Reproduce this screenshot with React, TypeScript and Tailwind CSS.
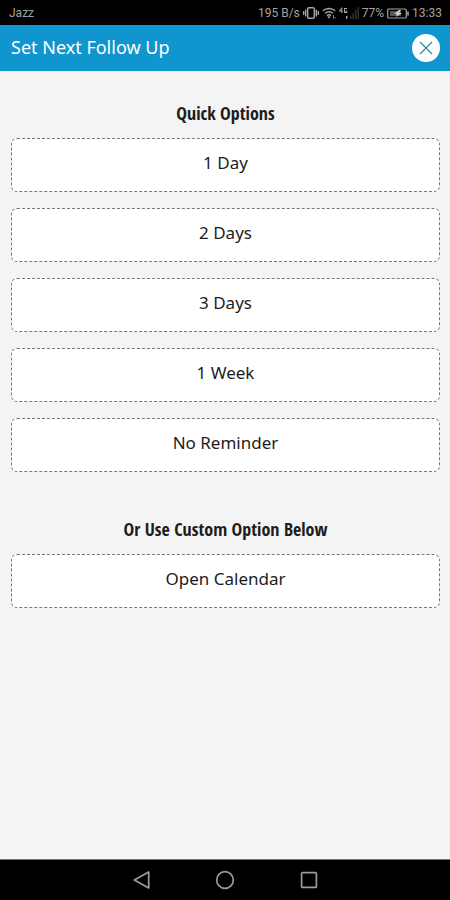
import { useState } from 'react'

const QUICK_OPTIONS = ['1 Day', '2 Days', '3 Days', '1 Week', 'No Reminder']

interface OptionButtonProps {
  label: string
  selected: boolean
  onSelect: (label: string) => void
}

function OptionButton({ label, selected, onSelect }: OptionButtonProps) {
  return (
    <button
      type="button"
      aria-pressed={selected}
      onClick={() => onSelect(label)}
      className="h-[54px] w-full rounded-md border border-dashed border-[#777777] bg-white pb-1 text-[17px] leading-6 text-[#1c1c1c]"
    >
      {label}
    </button>
  )
}

function SectionTitle({ text }: { text: string }) {
  return (
    <h2 className="mb-3 text-center font-['Open_Sans_Condensed','Noto_Sans_Condensed','Lato',sans-serif] text-[18px] leading-[25px] font-bold text-[#1c1c1c]">
      {text}
    </h2>
  )
}

function StatusBar() {
  return (
    <div className="flex h-[25px] items-center justify-between bg-black pt-px pr-2 pl-[9px] font-['Roboto',sans-serif] text-[12px] leading-4 text-[#a3a3a3]">
      <span>Jazz</span>
      <div className="flex items-center gap-[3px]">
        <span>195 B/s</span>
        {/* vibrate */}
        <svg className="h-3 w-4" viewBox="0 0 16 12" fill="none" stroke="currentColor" strokeWidth="1.4">
          <rect x="4.7" y="0.8" width="6.6" height="10.4" rx="1" />
          <path d="M2.7 2.5v7M13.3 2.5v7M0.7 4v4M15.3 4v4" />
        </svg>
        {/* wifi */}
        <svg className="h-3 w-[14px]" viewBox="0 0 14 12" fill="none" stroke="currentColor" strokeWidth="1.4">
          <path d="M0.8 3.8C4.3 0.7 9.7 0.7 13.2 3.8M3 6.3C5.2 4.3 8.8 4.3 11 6.3M5 8.6C6.2 7.6 7.8 7.6 9 8.6" />
          <path d="M5.8 9.8h2.4L7 11.2zM11.5 8v3.5M13 10v1.5" fill="currentColor" strokeWidth="0.8" />
        </svg>
        {/* 4G signal */}
        <svg className="h-3 w-5" viewBox="0 0 20 12" fill="currentColor">
          <path d="M2.5 0.5L0 3.8v0.7h2.3V6h1V4.5H4V3.7h-0.7V0.5zM2.3 2v1.7H1.1zM5 1h3v1H6v2.5h1V3.7h1.2V6H5zM7 9h1.5v2.5L7 12z" />
          <path d="M11 9h1.5v3H11zM13.5 6H15v6h-1.5zM16 3h1.5v9H16zM18.5 0H20v12h-1.5z" fill="#303030" />
        </svg>
        <span>77%</span>
        {/* battery */}
        <svg className="h-[11px] w-[22px]" viewBox="0 0 22 11" fill="none" stroke="currentColor">
          <rect x="0.7" y="1" width="18.6" height="9" rx="1" strokeWidth="1.2" />
          <path d="M21 3.5v4" strokeWidth="1.6" />
          <path d="M3 3h11v5H3z" fill="#555555" stroke="none" />
          <path d="M12 2L7 6h3l-1 3 6-4h-3l2-3z" fill="#d0d0d0" stroke="none" />
        </svg>
        <span>13:33</span>
      </div>
    </div>
  )
}

function NavBar() {
  return (
    <nav className="flex h-[41px] items-center justify-center gap-[60px] border-t border-[#777777] bg-black text-[#9b9b9b]">
      <button type="button" aria-label="Back" className="flex w-6 justify-center">
        <svg className="size-5" viewBox="0 0 20 20" fill="none" stroke="currentColor" strokeWidth="1.7" strokeLinejoin="round">
          <path d="M17.7 2v16L3.3 10z" />
        </svg>
      </button>
      <button type="button" aria-label="Home" className="flex w-6 justify-center">
        <svg className="size-5" viewBox="0 0 20 20" fill="none" stroke="currentColor" strokeWidth="1.7">
          <circle cx="10" cy="10" r="8.3" />
        </svg>
      </button>
      <button type="button" aria-label="Recent apps" className="flex w-6 justify-center">
        <svg className="size-5" viewBox="0 0 20 20" fill="none" stroke="currentColor" strokeWidth="1.7">
          <rect x="2.6" y="2.6" width="14.8" height="14.8" rx="1" />
        </svg>
      </button>
    </nav>
  )
}

export default function App() {
  const [selected, setSelected] = useState('')

  return (
    <div className="flex min-h-screen flex-col bg-[#f4f4f4] font-['Noto_Sans','Open_Sans',sans-serif]">
      <StatusBar />
      <header className="flex h-[46px] items-center justify-between bg-[#1095cf] pr-[10px] pl-[11px]">
        <h1 className="pb-0.5 text-[18px] leading-6 text-white">Set Next Follow Up</h1>
        <button type="button" aria-label="Close" className="flex size-7 items-center justify-center rounded-full bg-white text-[#2b91a8]">
          <svg className="size-4" viewBox="0 0 16 16" fill="none" stroke="currentColor" strokeWidth="1.3">
            <path d="M2 2l12 12M14 2L2 14" />
          </svg>
        </button>
      </header>

      <main className="flex-1 pt-[30px] pr-[10px] pl-[11px]">
        <section>
          <SectionTitle text="Quick Options" />
          <div className="flex flex-col gap-4">
            {QUICK_OPTIONS.map((label) => (
              <OptionButton key={label} label={label} selected={selected === label} onSelect={setSelected} />
            ))}
          </div>
        </section>
        <section className="pt-[45px]">
          <SectionTitle text="Or Use Custom Option Below" />
          <OptionButton label="Open Calendar" selected={selected === 'Open Calendar'} onSelect={setSelected} />
        </section>
      </main>

      <NavBar />
    </div>
  )
}
